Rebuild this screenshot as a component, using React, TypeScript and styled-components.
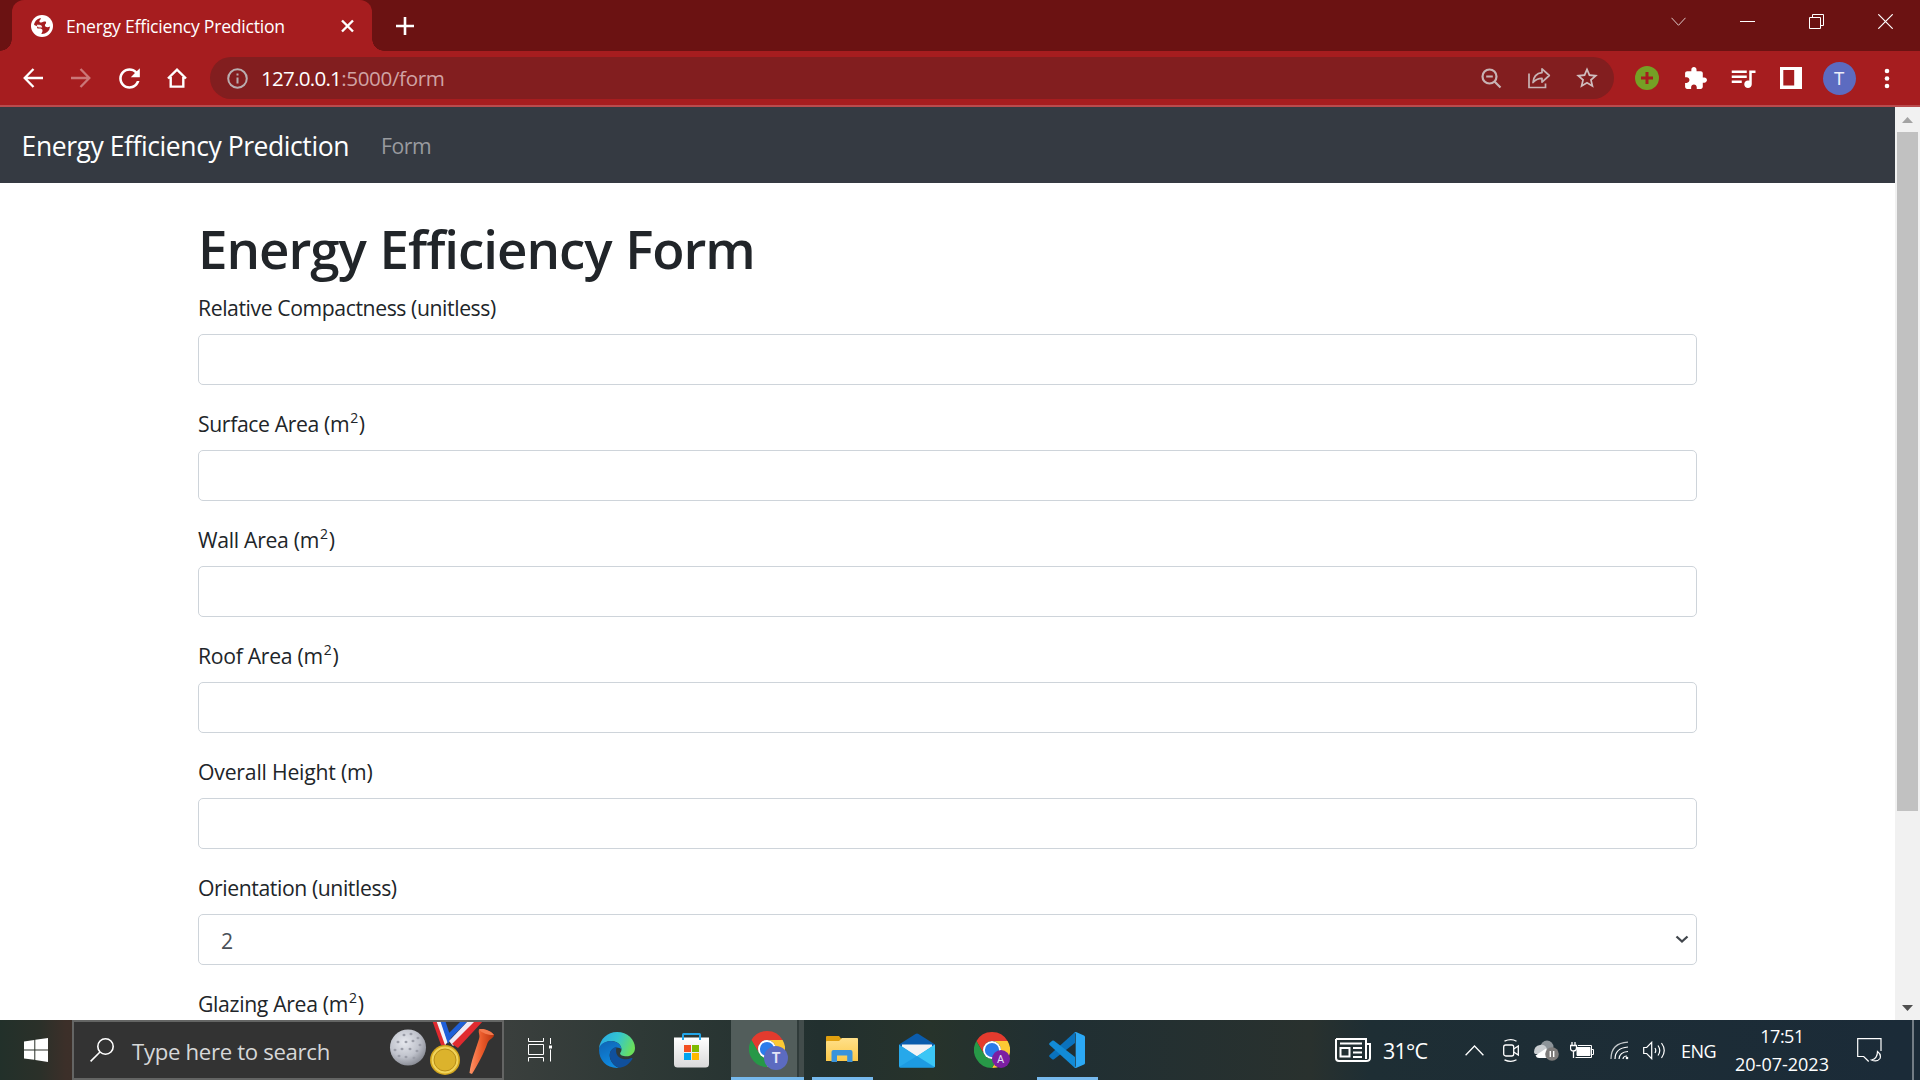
import React from "react";
import styled, { createGlobalStyle, css } from "styled-components";

const GlobalStyle = createGlobalStyle`
  *, *::before, *::after { box-sizing: border-box; }
  html, body { margin: 0; padding: 0; overflow: hidden; }
  body { font-family: "Open Sans", "Noto Sans", sans-serif; }
  svg { display: block; flex: none; }
`;

const Screen = styled.div`
  display: flex;
  flex-direction: column;
  width: 1920px;
  height: 1080px;
  overflow: hidden;
  background: #fff;
`;

/* ---------- browser chrome ---------- */

const TabStrip = styled.div`
  display: flex;
  align-items: flex-start;
  height: 51px;
  padding-left: 12px;
  background: #6b1212;
`;

const Tab = styled.div`
  position: relative;
  display: flex;
  align-items: center;
  width: 360px;
  height: 51px;
  padding: 0 17px 0 19px;
  border-radius: 12px 12px 0 0;
  background: #a61d1f;

  &::before,
  &::after {
    content: "";
    position: absolute;
    bottom: 0;
    width: 12px;
    height: 12px;
  }
  &::before {
    left: -12px;
    background: radial-gradient(circle at 0 0, transparent 11.5px, #a61d1f 12px);
  }
  &::after {
    right: -12px;
    background: radial-gradient(circle at 100% 0, transparent 11.5px, #a61d1f 12px);
  }
`;

const TabTitle = styled.span`
  flex: 1;
  margin-left: 13px;
  color: #fff;
  font-size: 17.6px;
  line-height: 24px;
  letter-spacing: -0.23px;
  white-space: nowrap;
`;

const NewTab = styled.div`
  display: flex;
  margin: 16px 0 0 23px;
`;

const WindowControls = styled.div`
  display: flex;
  margin-left: auto;
`;

const WindowButton = styled.div`
  display: flex;
  align-items: center;
  justify-content: center;
  width: 69px;
  height: 43px;
`;

const Toolbar = styled.div`
  display: flex;
  align-items: center;
  height: 56px;
  padding: 0 9px;
  border-bottom: 2px solid #b94b4d;
  background: #a61d1f;
`;

const ToolButton = styled.div`
  display: flex;
  align-items: center;
  justify-content: center;
  flex: none;
  width: 48px;
  height: 42px;
`;

const Omnibox = styled.div`
  display: flex;
  align-items: center;
  width: 1404px;
  height: 42px;
  margin: 0 9px;
  padding: 0 3px 0 17px;
  border-radius: 21px;
  background: #821e1f;
`;

const Address = styled.div`
  display: flex;
  flex: 1;
  margin-left: 13px;
  font-size: 20.6px;
  line-height: 28px;
`;

const AddressPart = styled.span<{ $muted?: boolean }>`
  color: ${(p) => (p.$muted ? "#d0a3a4" : "#fff")};
  letter-spacing: ${(p) => (p.$muted ? "-0.35px" : "-0.75px")};
`;

const Avatar = styled.div`
  display: flex;
  align-items: center;
  justify-content: center;
  width: 33px;
  height: 33px;
  border-radius: 50%;
  background: #5c6bc0;
  color: #eceefa;
  font-family: Roboto, sans-serif;
  font-size: 18px;
`;

/* ---------- web page ---------- */

const Viewport = styled.div`
  display: flex;
  height: 913px;
  overflow: hidden;
`;

const Page = styled.div`
  width: 1895px;
  color: #212529;
`;

const Navbar = styled.nav`
  display: flex;
  align-items: center;
  height: 76px;
  padding: 1px 21.6px 0;
  background: #353a42;
`;

const Brand = styled.span`
  width: 327px;
  margin-right: 21.6px;
  color: #fff;
  font-size: 26.5px;
  letter-spacing: -0.43px;
  line-height: 40px;
  white-space: nowrap;
`;

const NavLink = styled.span`
  padding: 0 10.8px;
  color: #999b9f;
  font-size: 21.2px;
  letter-spacing: -0.4px;
  line-height: 32px;
`;

const Container = styled.main`
  width: 1499px;
  margin: 32px auto 0 198px;
`;

const Heading = styled.h1`
  margin: 0;
  height: 76px;
  padding-top: 1px;
  font-size: 52.9px;
  font-weight: 600;
  letter-spacing: -1.03px;
  word-spacing: 1px;
  line-height: 65px;
`;

const Group = styled.div`
  height: 116px;
`;

const Label = styled.label<{ $tracking?: number }>`
  display: block;
  height: 43px;
  padding-top: 1px;
  font-size: 21.2px;
  letter-spacing: ${(p) => p.$tracking ?? -0.41}px;
  line-height: 32px;
`;

const Sup = styled.sup`
  position: relative;
  top: -0.68em;
  margin: 0 1px;
  font-size: 66%;
  line-height: 0;
  vertical-align: baseline;
`;

const control = css`
  width: 100%;
  height: 51px;
  border: 1px solid #ced4da;
  border-radius: 5px;
  background: #fff;
`;

const Input = styled.input`
  ${control}
  display: block;
  outline: none;
`;

const Select = styled.div`
  ${control}
  display: flex;
  align-items: center;
  justify-content: space-between;
  padding: 1px 7px 0 22px;
  color: #495057;
  font-size: 21.2px;
`;

const Scrollbar = styled.div`
  display: flex;
  flex-direction: column;
  align-items: center;
  width: 25px;
  padding: 10px 0 9px;
  background: #f1f1f1;
`;

const Thumb = styled.div`
  width: 21px;
  height: 679px;
  margin: 9px 0 auto;
  background: #c1c1c1;
`;

/* ---------- taskbar ---------- */

const Taskbar = styled.footer`
  display: flex;
  height: 60px;
  background: linear-gradient(
    90deg,
    #22302a 0,
    #2b3029 40px,
    #3c2f29 66px,
    #3a3f3d 508px,
    #2e3936 640px,
    #22302f 820px,
    #27332b 930px,
    #202f33 1060px,
    #29312e 1310px,
    #1e2e34 1370px,
    #1b2b38 1900px
  );
`;

const StartButton = styled.div`
  display: flex;
  align-items: center;
  justify-content: center;
  width: 72px;
`;

const SearchBox = styled.div`
  display: flex;
  align-items: center;
  width: 432px;
  padding: 0 6px 0 16px;
  border: 2px solid #646564;
  background: #333;
`;

const SearchText = styled.span`
  flex: 1;
  margin-left: 18px;
  padding-top: 2px;
  color: #d6d7d8;
  font-size: 22.2px;
  letter-spacing: -0.33px;
  white-space: nowrap;
`;

const TaskView = styled.div`
  display: flex;
  align-items: center;
  justify-content: center;
  width: 75px;
  padding-right: 3px;
`;

const TaskButton = styled.div<{ $running?: boolean }>`
  position: relative;
  display: flex;
  align-items: center;
  justify-content: center;
  width: 75px;

  ${(p) =>
    p.$running &&
    css`
      &::after {
        content: "";
        position: absolute;
        bottom: 0;
        left: 8px;
        width: 61px;
        height: 3px;
        background: #76b9ed;
      }
    `}
`;

const ActiveTaskButton = styled.div`
  display: flex;
  align-items: center;
  width: 73px;
  margin: 0 0 0 2px;
  padding-left: 18px;
  border-bottom: 3px solid #76b9ed;
  background: linear-gradient(90deg, #525d5b 0 66px, #303b3a 66px 68px, #424c4b 68px);
`;

const Tray = styled.div`
  display: flex;
  align-items: center;
  margin-left: auto;
  color: #fff;
`;

const Weather = styled.div`
  display: flex;
  align-items: center;
  gap: 12px;
  width: 131px;
  padding-left: 1px;
  font-size: 21.5px;
  letter-spacing: -0.8px;
`;

const TrayIcons = styled.div`
  display: flex;
  align-items: center;
  width: 216px;
`;

const TraySlot = styled.div<{ $w: number }>`
  display: flex;
  align-items: center;
  width: ${(p) => p.$w}px;
`;

const Language = styled.span`
  width: 53px;
  padding-top: 1px;
  font-size: 18px;
  letter-spacing: -0.5px;
`;

const Clock = styled.div`
  display: flex;
  flex-direction: column;
  align-items: center;
  gap: 4px;
  width: 96px;
  font-size: 18px;
  line-height: 24px;
`;

const Time = styled.span`
  letter-spacing: -0.5px;
`;

const Notifications = styled.div`
  display: flex;
  width: 82px;
  padding-left: 27px;
`;

const ShowDesktop = styled.div`
  align-self: stretch;
  width: 8px;
  border-left: 2px solid #727c85;
`;

/* ---------- icons ---------- */

const Favicon = () => (
  <svg width="22" height="22" viewBox="0 0 22 22">
    <circle cx="11" cy="11" r="11" fill="#fff" />
    <path d="M3 9.600C4 5.600 6.800 3.200 10 3.200c-.2 1.500-1.600 1.700-1.600 3 0 1 .9 1.300 1.800 1.300 1.400 0 1.700-.9 2.900-.9h.9c.8 0 1.100.5 1.100 1.200 0 1.200-1.200 1.200-1.200 2.500 0 1.200 1.200 1.900 2.500 1.900 1 0 1.700-.5 2.700-.7A8.200 8.200 0 0 1 10.400 19c.2-1.400 1.100-1.900 1.100-3.300 0-1.700-1.400-2.100-2.900-2.100H7.300c-.8 0-1.200-.5-1.200-1.200v-1.100c-1.100-.3-2.200-.7-3.100-1.700z" fill="#a61d1f" />
    <path d="M5.800 9.800h2.400c1.800 0 3 1.200 3 2.700h-3c-1.500 0-2.400-.9-2.400-2.700z" fill="#fff" opacity=".9" />
  </svg>
);

const Stroke = ({
  d,
  w,
  h,
  sw = 1,
  color = "#fff",
}: {
  d: string;
  w: number;
  h: number;
  sw?: number;
  color?: string;
}) => (
  <svg width={w} height={h} viewBox={`0 0 ${w} ${h}`} fill="none" stroke={color} strokeWidth={sw}>
    <path d={d} />
  </svg>
);

const Material = ({ d, size, color = "#fff" }: { d: string; size: number; color?: string }) => (
  <svg width={size} height={size} viewBox="0 0 24 24" fill={color}>
    <path d={d} />
  </svg>
);

const RELOAD =
  "M17.65 6.35C16.2 4.9 14.21 4 12 4c-4.42 0-7.99 3.580-7.990 8s3.570 8 7.990 8c3.730 0 6.840-2.550 7.730-6h-2.080c-.82 2.330-3.040 4-5.650 4-3.310 0-6-2.690-6-6s2.690-6 6-6c1.660 0 3.140.690 4.220 1.780L13 11h7V4l-2.350 2.350z";
const STAR =
  "M22 9.24l-7.190-.62L12 2 9.190 8.630 2 9.240l5.460 4.730L5.820 21 12 17.270 18.180 21l-1.630-7.030L22 9.240zM12 15.400l-3.760 2.270 1-4.280-3.320-2.880 4.380-.38L12 6.100l1.710 4.040 4.380.38-3.320 2.880 1 4.280L12 15.400z";
const PUZZLE =
  "M20.5 11H19V7c0-1.100-.9-2-2-2h-4V3.500C13 2.120 11.880 1 10.500 1S8 2.120 8 3.500V5H4c-1.100 0-1.990.9-1.990 2v3.800H3.500c1.490 0 2.700 1.210 2.700 2.700s-1.210 2.700-2.700 2.700H2V20c0 1.100.9 2 2 2h3.800v-1.500c0-1.490 1.210-2.700 2.700-2.700 1.490 0 2.700 1.210 2.700 2.700V22H17c1.100 0 2-.9 2-2v-4h1.500c1.380 0 2.500-1.120 2.500-2.500S21.880 11 20.500 11z";
const QUEUE =
  "M15 6H3v2h12V6zm0 4H3v2h12v-2zM3 16h8v-2H3v2zM17 6v8.180c-.31-.11-.65-.18-1-.18-1.660 0-3 1.340-3 3s1.340 3 3 3 3-1.340 3-3V8h3V6h-5z";

const InfoIcon = () => (
  <svg width="21" height="21" viewBox="0 0 21 21">
    <circle cx="10.500" cy="10.500" r="9.300" fill="none" stroke="#b9adaf" strokeWidth="2" />
    <path d="M9.500 9.500h2v6h-2zM9.500 5.500h2v2h-2z" fill="#b9adaf" />
  </svg>
);

const ZoomOutIcon = () => (
  <svg width="21" height="21" viewBox="0 0 21 21" fill="none" stroke="#c8b3b4" strokeWidth="2.200">
    <circle cx="8.500" cy="8.500" r="7" />
    <path d="M13.500 13.500l6 6M5.200 8.500h6.600" />
  </svg>
);

const ShareIcon = () => (
  <svg width="24" height="22" viewBox="0 0 24 22" fill="none" stroke="#c8b3b4" strokeWidth="1.700">
    <path d="M2 6.500V20.500H18.500V16.500" />
    <path d="M15 1.800L22.300 8.500 15 15.200V11.300C11 11.300 8.300 12.500 6 15.500 6.500 10 9.500 6.300 15 5.700z" strokeLinejoin="round" />
  </svg>
);

const PlusBadge = () => (
  <svg width="24" height="24" viewBox="0 0 24 24">
    <circle cx="12" cy="12" r="12" fill="#75a025" />
    <path d="M12 6v12M6 12h12" stroke="#a61d1f" strokeWidth="3" />
  </svg>
);

const SidePanelIcon = () => (
  <svg width="22" height="22" viewBox="0 0 22 22">
    <path fillRule="evenodd" d="M0 0h22v22H0zM3.300 3h10.900v15.500H3.300z" fill="#fff" />
  </svg>
);

const DotsIcon = () => (
  <svg width="6" height="21" viewBox="0 0 6 21" fill="#fff">
    <circle cx="3" cy="3" r="2.300" />
    <circle cx="3" cy="10.500" r="2.300" />
    <circle cx="3" cy="18" r="2.300" />
  </svg>
);

const RestoreIcon = () => (
  <svg width="15" height="15" viewBox="0 0 15 15" fill="none" stroke="#fff">
    <path d="M.5 3.500h11v11H.5zM3.500 3.500V.5h11v11h-3" />
  </svg>
);

const WindowsIcon = () => (
  <svg width="24" height="24" viewBox="0 0 24 24" fill="#fff">
    <path d="M0 3.400L10.300 2v9.400H0zM11.300 1.800L24 0v11.400H11.300zM0 12.400h10.300v9.400L0 20.500zM11.300 12.400H24V24l-12.700-1.900z" />
  </svg>
);

const SearchIcon = () => (
  <svg width="24" height="24" viewBox="0 0 24 24" fill="none" stroke="#fff" strokeWidth="1.600">
    <circle cx="15.500" cy="8.500" r="7.700" />
    <path d="M10 14L.6 23.400" />
  </svg>
);

const DIMPLES = [
  [14, 5], [21, 4], [28, 8], [8, 12], [16, 12], [23, 11], [30, 15], [5, 20],
  [12, 19], [20, 19], [27, 21], [9, 26], [16, 27], [24, 28],
];

const SportsArt = () => (
  <svg width="108" height="56" viewBox="0 0 108 56">
    <defs>
      <radialGradient id="ball" cx=".4" cy=".35" r=".7">
        <stop offset="0" stopColor="#e6e8ee" />
        <stop offset=".6" stopColor="#bfc2cb" />
        <stop offset="1" stopColor="#83868f" />
      </radialGradient>
      <linearGradient id="tee" x1="0" x2="1">
        <stop offset="0" stopColor="#ff9468" />
        <stop offset=".5" stopColor="#ea5a2a" />
        <stop offset="1" stopColor="#b9340f" />
      </linearGradient>
    </defs>
    <circle cx="20" cy="25.500" r="18" fill="url(#ball)" />
    {DIMPLES.map(([x, y]) => (
      <ellipse key={`${x}-${y}`} cx={x + 2} cy={y + 8} rx="1.500" ry="1.300" fill="#9b9ea8" />
    ))}
    <path d="M44-2h4l10 25h-5z" fill="#e02a2f" />
    <path d="M48-2h5l7 22-3 3z" fill="#f4f4f8" />
    <path d="M52-2h5l6 18-3 6z" fill="#1f5fd8" />
    <path d="M74-2h7L62 17l-2-5z" fill="#1f5fd8" />
    <path d="M81-2h8L65 24l-4-5z" fill="#efe9f5" />
    <path d="M88-2h8L70 26l-6-4z" fill="#e02a2f" />
    <circle cx="57" cy="38" r="15" fill="#d2a51d" />
    <circle cx="57" cy="38" r="13.400" fill="#f1d45a" />
    <circle cx="57" cy="38" r="11" fill="#dcb32c" stroke="#b98e18" strokeWidth="1" />
    <path d="M91 7.500C95 6 103 9 106 13c0 3-5 4-6.500 8-3 9-9.500 21-15.500 31l-2.500-1C83 39 88 27 91 17c1.500-4-1-6 0-9.500z" fill="url(#tee)" />
    <path d="M91 7.500C95 6 103 9 106 13c-4 .5-12-1.500-15-5.500z" fill="#f4794d" />
  </svg>
);

const TaskViewIcon = () => (
  <svg width="24" height="24" viewBox="0 0 24 24" fill="none" stroke="#fff">
    <path d="M.5 0v3.500h15V0M.5 6.500h15v10H.5zM.5 23.500v-4h15v4M22.500 0v6M22.500 11.500v12" />
    <path d="M21 7.500h3v3h-3z" fill="#fff" stroke="none" />
  </svg>
);

const EdgeIcon = () => (
  <svg width="36" height="36" viewBox="0 0 36 36">
    <defs>
      <linearGradient id="edgeTop" x1="0" y1=".2" x2="1" y2=".5">
        <stop offset="0" stopColor="#27a9e6" />
        <stop offset=".5" stopColor="#34c5d0" />
        <stop offset="1" stopColor="#6be05a" />
      </linearGradient>
      <linearGradient id="edgeBody" x1="0" y1="0" x2=".4" y2="1">
        <stop offset="0" stopColor="#0f63b3" />
        <stop offset="1" stopColor="#0f8ae0" />
      </linearGradient>
    </defs>
    <path d="M0 16.500C1 7 8.500 0 18 0c10.500 0 18 7.500 18 16 0 5-3.700 8.300-8.500 8.300-4 0-6.400-1.300-6.400-2.800 0-1 1.400-1.500 1.400-4C22.500 13 18 9 12.500 9 7 9 2.500 12 0 16.500z" fill="url(#edgeTop)" />
    <path d="M0 18C0 12.500 5.500 9 12 9c6 0 10.500 4 10.500 8.500C20 14.500 13 14.500 11 21c-1.500 5 2 12 9 14.900C8.500 37 0 28.500 0 18z" fill="url(#edgeBody)" />
    <path d="M17.500 14.800C13 16 9.800 20 11 25.500 12 31 17 35.500 21 35.700c5-.5 9.500-4 12.300-8.700.4-.8-.3-1.200-1-.9-6 3-14.800.4-15.200-6.600-.1-2 .4-3.500.4-4.700z" fill="#10509c" />
  </svg>
);

const StoreIcon = () => (
  <svg width="35" height="36" viewBox="0 0 35 36">
    <defs>
      <linearGradient id="bag" x1="0" y1="0" x2="0" y2="1">
        <stop offset="0" stopColor="#fff" />
        <stop offset="1" stopColor="#d9d9da" />
      </linearGradient>
    </defs>
    <path d="M0 5.500h35V32a3.500 3.500 0 0 1-3.500 3.500h-28A3.500 3.500 0 0 1 0 32z" fill="url(#bag)" />
    <path d="M9 8V2.500Q9 2 9.500 2h16q.5 0 .5.500V8" fill="none" stroke="#22a5e8" strokeWidth="2" />
    <path d="M10 13h7v7h-7z" fill="#f25022" />
    <path d="M18 13h7v7h-7z" fill="#7fba00" />
    <path d="M10 21h7v7h-7z" fill="#00a4ef" />
    <path d="M18 21h7v7h-7z" fill="#ffb900" />
  </svg>
);

const Badge = styled.span<{ $color: string; $large?: boolean }>`
  position: absolute;
  left: ${(p) => (p.$large ? 15 : 18)}px;
  top: ${(p) => (p.$large ? 15 : 18)}px;
  display: flex;
  align-items: center;
  justify-content: center;
  width: ${(p) => (p.$large ? 24 : 18)}px;
  height: ${(p) => (p.$large ? 24 : 18)}px;
  border-radius: 50%;
  background: ${(p) => p.$color};
  color: #e3e4f6;
  font-family: Roboto, sans-serif;
  font-size: ${(p) => (p.$large ? 14 : 11)}px;
  font-weight: ${(p) => (p.$large ? 700 : 400)};
`;

const ChromeWrap = styled.div`
  position: relative;
  width: 36px;
  height: 36px;
`;

const ChromeIcon = ({ letter, color, large }: { letter: string; color: string; large?: boolean }) => (
  <ChromeWrap>
    <svg width="36" height="36" viewBox="0 0 48 48">
      <path d="M24 12h20.785A24 24 0 0 0 3.215 12L13.608 30A12 12 0 0 1 24 12z" fill="#e33b2e" />
      <path d="M34.392 30L24 48A24 24 0 0 0 44.785 12H24A12 12 0 0 1 34.392 30z" fill="#fcc934" />
      <path d="M13.608 30L3.215 12A24 24 0 0 0 24 48l10.392-18A12 12 0 0 1 13.608 30z" fill="#279847" />
      <circle cx="24" cy="24" r="12" fill="#fff" />
      <circle cx="24" cy="24" r="9.500" fill="#2a7bea" />
    </svg>
    <Badge $color={color} $large={large}>{letter}</Badge>
  </ChromeWrap>
);

const ExplorerIcon = () => (
  <svg width="32" height="28" viewBox="0 0 32 28">
    <defs>
      <linearGradient id="folder" x1="0" y1="0" x2="0" y2="1">
        <stop offset="0" stopColor="#ffe08a" />
        <stop offset="1" stopColor="#fcc94a" />
      </linearGradient>
    </defs>
    <path d="M0 1q0-1 1-1h12l2 2.500h16q1 0 1 1V12H0z" fill="#e0a00f" />
    <path d="M0 6q0-1 1-1h12l3-3h15q1 0 1 1v22H0z" fill="url(#folder)" />
    <path d="M5.500 26V16q0-2 2-2h17q2 0 2 2v10h-5.300v-6.500H11V26z" fill="#3a93dc" />
  </svg>
);

const MailIcon = () => (
  <svg width="36" height="35" viewBox="0 0 36 35">
    <path d="M0 11.500L16.500 1q1.500-.9 3 0L36 11.500 18 24z" fill="#0a5cad" />
    <path d="M3 11.500h30V14L18 24 3 14z" fill="#f3f3f5" />
    <path d="M0 11.500l18 11.800L36 11.500V33q0 1.500-1.500 1.500h-33Q0 34.500 0 33z" fill="#27a8ea" />
    <path d="M18 23.200L36 11.500V34z" fill="#3bc6f5" />
    <path d="M0 34l18-11 17 11.300-.5.200h-33z" fill="#1d9be2" />
  </svg>
);

const CodeIcon = () => (
  <svg width="36" height="36" viewBox="0 0 36 36">
    <path d="M26 0v11L5 27.200q-1 .7-1.800 0L.6 24.900q-.9-.9 0-1.800z" fill="#0a72bd" />
    <path d="M26 36V25L5 8.800q-1-.7-1.800 0L.6 11.100q-.9.9 0 1.800z" fill="#128bd6" />
    <path d="M25.500.3L27 0l8 3.500q1 .5 1 1.600v25.800q0 1.100-1 1.600L27 36l-1.500-.3q1.200-.5 1.200-2V2.300q0-1.500-1.200-2z" fill="#2ba8f5" />
  </svg>
);

const NewsIcon = () => (
  <svg width="36" height="24" viewBox="0 0 36 24" fill="none" stroke="#fff" strokeWidth="2">
    <path d="M1 1h30v20M1 1v19q0 3 3 3h27q4 0 4-3V6h-4" />
    <path d="M5 5.500h22M18 10h9M18 14.500h9M18 19h9M5.500 10h9v8.500h-9z" />
  </svg>
);

const CameraIcon = () => (
  <svg width="16" height="23" viewBox="0 0 16 23" fill="none" stroke="#fff" strokeWidth="1.300">
    <path d="M1.500 2.200q6.500-3 12 0M1.500 20.800q6.500 3 12 0" />
    <rect x=".7" y="6" width="10" height="11" rx="2" />
    <path d="M10.700 10l4.600-3v9l-4.600-3" />
  </svg>
);

const CloudIcon = () => (
  <svg width="25" height="22" viewBox="0 0 25 22">
    <circle cx="13" cy="8" r="6.500" fill="#8d9499" />
    <path d="M12 5q6 0 7.500 5.500L9 16z" fill="#8d9499" />
    <path d="M0 13q0-6 6-7 5-1 7 4l5 5H1q-1-1-1-2z" fill="#c9cdd0" />
    <path d="M1.500 16.500L12 9.500l6 6.500q-1 3-3 3H5q-2.500 0-3.500-2.500z" fill="#fff" />
    <circle cx="18" cy="15" r="6.800" fill="#7e7c7b" />
    <path d="M16.300 12v6M19.700 12v6" stroke="#fff" strokeWidth="1.400" />
  </svg>
);

const BatteryIcon = () => (
  <svg width="24" height="17" viewBox="0 0 24 17" fill="none" stroke="#fff">
    <path d="M8 3.500h13.500v12H5.500M22 7.500h1.500v5H22" />
    <path d="M7 5.500h13v8H7z" fill="#fff" />
    <path d="M.5 3.500h6v2.500q0 3-3 3t-3-3zM2 3V0M5 3V0M3.500 9v7" strokeWidth="1.300" />
  </svg>
);

const WifiIcon = () => (
  <svg width="19" height="19" viewBox="0 0 19 19" fill="none" stroke="#fff" strokeWidth="1.200">
    <path d="M1 18Q1 2 18 1.200" opacity=".75" />
    <path d="M5 18Q5 7 18 6M9 18q.5-7 9-7.500M13 18q.3-3 4-3" />
    <circle cx="17" cy="17" r="1.300" fill="#fff" stroke="none" />
  </svg>
);

const SpeakerIcon = () => (
  <svg width="23" height="19" viewBox="0 0 23 19" fill="none" stroke="#fff" strokeWidth="1.200">
    <path d="M.7 6.500h3l5-5.200v16.400l-5-5.200h-3z" />
    <path d="M12 7q1.500 2.500 0 5M15 4.500q3.500 5 0 10M18.500 2q5.500 7.500 0 15" />
  </svg>
);

const NotificationIcon = () => (
  <svg width="25" height="25" viewBox="0 0 25 25" fill="none" stroke="#fff" strokeWidth="1.200">
    <path d="M24 13V.7H.7v17.800h6l5 5" />
    <path d="M20.500 13.500q4 3 2.500 7-3 4-8.500 1.500 6-1.500 6-8.500z" />
  </svg>
);

const Triangle = ({ down, color }: { down?: boolean; color: string }) => (
  <svg width="11" height="6" viewBox="0 0 11 6" fill={color}>
    <path d={down ? "M0 0h11L5.500 6z" : "M0 6h11L5.500 0z"} />
  </svg>
);

/* ---------- content ---------- */

const fields: { text: string; squared?: boolean; tracking?: number }[] = [
  { text: "Relative Compactness (unitless)" },
  { text: "Surface Area (m", squared: true, tracking: -0.38 },
  { text: "Wall Area (m", squared: true, tracking: -0.3 },
  { text: "Roof Area (m", squared: true, tracking: -0.3 },
  { text: "Overall Height (m)", tracking: -0.2 },
];

const FieldLabel = ({ text, squared, tracking }: { text: string; squared?: boolean; tracking?: number }) => (
  <Label $tracking={tracking}>
    {text}
    {squared && <><Sup>2</Sup>)</>}
  </Label>
);

export default function App() {
  return (
    <Screen>
      <GlobalStyle />
      <TabStrip>
        <Tab>
          <Favicon />
          <TabTitle>Energy Efficiency Prediction</TabTitle>
          <Stroke w={16} h={14} sw={2.4} d="M3 1.500l11 11M14 1.500l-11 11" />
        </Tab>
        <NewTab>
          <Stroke w={20} h={20} sw={2.6} d="M10 1v18M1 10h18" />
        </NewTab>
        <WindowControls>
          <WindowButton><Stroke w={15} h={10} d="M.5 .8l7 7.500 7-7.500" color="#dcc9c9" /></WindowButton>
          <WindowButton><Stroke w={15} h={1} d="M0 .5h15" /></WindowButton>
          <WindowButton><RestoreIcon /></WindowButton>
          <WindowButton><Stroke w={15} h={15} sw={1.2} d="M.3 .3l14.400 14.400M14.700 .3L.3 14.700" /></WindowButton>
        </WindowControls>
      </TabStrip>

      <Toolbar>
        <ToolButton><Stroke w={20} h={20} sw={2.3} d="M20 10H2M10.500 1L1.700 10l8.800 9" /></ToolButton>
        <ToolButton><Stroke w={20} h={20} sw={2.3} color="#cb7778" d="M0 10h18M9.500 1l8.800 9-8.800 9" /></ToolButton>
        <ToolButton><Material size={31} d={RELOAD} /></ToolButton>
        <ToolButton><Stroke w={20} h={20} sw={2.4} d="M1 10.500L10 1.700l9 8.800M3.700 9v9.600h12.600V9" /></ToolButton>
        <Omnibox>
          <InfoIcon />
          <Address>
            <AddressPart>127.0.0.1</AddressPart>
            <AddressPart $muted>:5000/form</AddressPart>
          </Address>
          <ToolButton><ZoomOutIcon /></ToolButton>
          <ToolButton><ShareIcon /></ToolButton>
          <ToolButton><Material size={26} d={STAR} color="#cfbdbe" /></ToolButton>
        </Omnibox>
        <ToolButton><PlusBadge /></ToolButton>
        <ToolButton><Material size={25} d={PUZZLE} /></ToolButton>
        <ToolButton><Material size={30} d={QUEUE} /></ToolButton>
        <ToolButton><SidePanelIcon /></ToolButton>
        <ToolButton><Avatar>T</Avatar></ToolButton>
        <ToolButton><DotsIcon /></ToolButton>
      </Toolbar>

      <Viewport>
        <Page>
          <Navbar>
            <Brand>Energy Efficiency Prediction</Brand>
            <NavLink>Form</NavLink>
          </Navbar>
          <Container>
            <Heading>Energy Efficiency Form</Heading>
            {fields.map((f) => (
              <Group key={f.text}>
                <FieldLabel {...f} />
                <Input />
              </Group>
            ))}
            <Group>
              <FieldLabel text="Orientation (unitless)" />
              <Select>
                2
                <Stroke w={14} h={10} sw={2.3} color="#41464c" d="M1.500 1.500L7 6.500l5.500-5" />
              </Select>
            </Group>
            <FieldLabel text="Glazing Area (m" squared tracking={-0.33} />
          </Container>
        </Page>
        <Scrollbar>
          <Triangle color="#a3a3a3" />
          <Thumb />
          <Triangle down color="#505050" />
        </Scrollbar>
      </Viewport>

      <Taskbar>
        <StartButton><WindowsIcon /></StartButton>
        <SearchBox>
          <SearchIcon />
          <SearchText>Type here to search</SearchText>
          <SportsArt />
        </SearchBox>
        <TaskView><TaskViewIcon /></TaskView>
        <TaskButton><EdgeIcon /></TaskButton>
        <TaskButton><StoreIcon /></TaskButton>
        <ActiveTaskButton><ChromeIcon letter="T" color="#5c6bc0" large /></ActiveTaskButton>
        <TaskButton $running><ExplorerIcon /></TaskButton>
        <TaskButton><MailIcon /></TaskButton>
        <TaskButton><ChromeIcon letter="A" color="#7b1fa2" /></TaskButton>
        <TaskButton $running><CodeIcon /></TaskButton>
        <Tray>
          <Weather><NewsIcon />31°C</Weather>
          <TrayIcons>
            <TraySlot $w={38}><Stroke w={19} h={11} sw={1.3} d="M.6 10.300L9.500 1l8.900 9.300" /></TraySlot>
            <TraySlot $w={31}><CameraIcon /></TraySlot>
            <TraySlot $w={36}><CloudIcon /></TraySlot>
            <TraySlot $w={40}><BatteryIcon /></TraySlot>
            <TraySlot $w={33}><WifiIcon /></TraySlot>
            <TraySlot $w={38}><SpeakerIcon /></TraySlot>
          </TrayIcons>
          <Language>ENG</Language>
          <Clock><Time>17:51</Time><span>20-07-2023</span></Clock>
          <Notifications><NotificationIcon /></Notifications>
          <ShowDesktop />
        </Tray>
      </Taskbar>
    </Screen>
  );
}
